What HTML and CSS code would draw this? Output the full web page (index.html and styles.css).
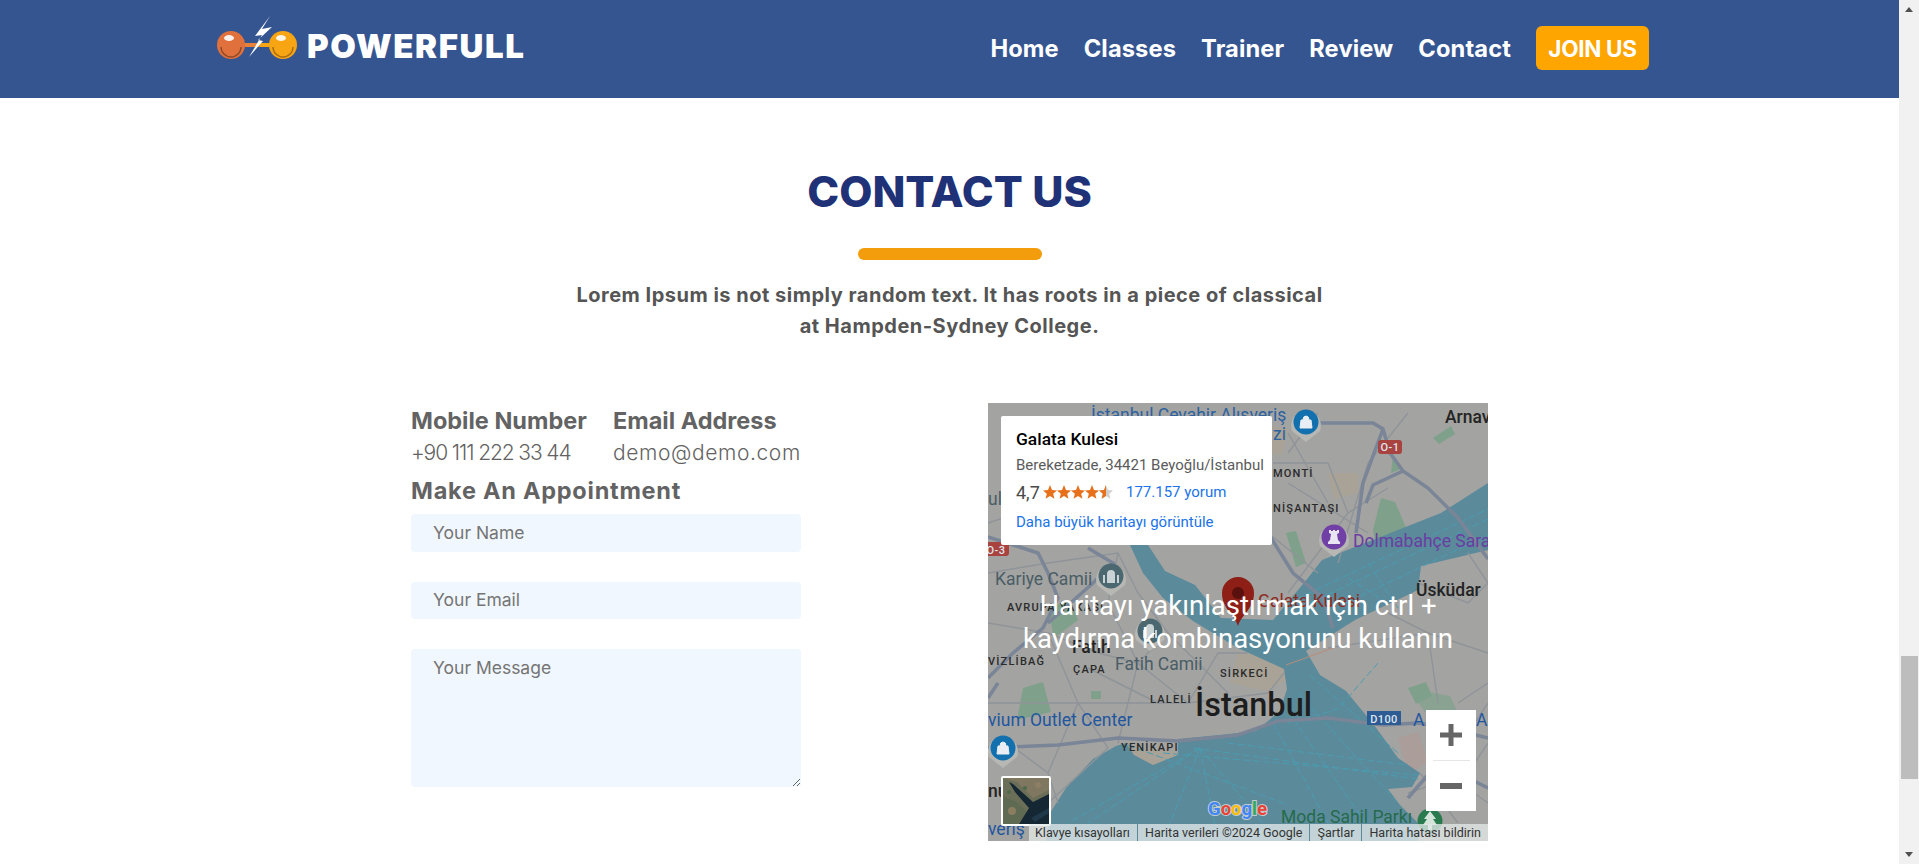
FILE: index.html
```html
<!DOCTYPE html>
<html lang="tr">
<head>
<meta charset="utf-8">
<title>Powerfull - Contact</title>
<link rel="stylesheet" href="styles.css">
</head>
<body>
<div class="page">
  <header class="topbar">
    <a class="logo" href="#">
      <svg class="logo-mark" width="92" height="50" viewBox="0 0 92 50" aria-hidden="true">
        <rect x="14" y="27" width="30" height="4" fill="#e8813a"/>
        <rect x="44" y="27" width="26" height="4" fill="#f8a513"/>
        <circle cx="15" cy="29" r="14" fill="#e0703c"/>
        <circle cx="67" cy="29" r="14" fill="#f8a513"/>
        <path d="M5 31a10 10 0 0 0 20 0" fill="none" stroke="#8d4a2a" stroke-width="1.4"/>
        <path d="M57 31a10 10 0 0 0 20 0" fill="none" stroke="#a86c10" stroke-width="1.4"/>
        <ellipse cx="13" cy="22" rx="5" ry="3" fill="#fff" opacity=".9"/>
        <ellipse cx="65" cy="22" rx="5" ry="3" fill="#fff" opacity=".9"/>
        <path d="M54 0 39 20 46 19 33 41 47 25 42 24 56 11 46 13Z" fill="#fff"/>
      </svg>
      <span class="logo-text">POWERFULL</span>
    </a>
    <nav class="nav">
      <a href="#">Home</a>
      <a href="#">Classes</a>
      <a href="#">Trainer</a>
      <a href="#">Review</a>
      <a href="#">Contact</a>
      <a class="join" href="#">JOIN US</a>
    </nav>
  </header>

  <main class="contact">
    <h1 class="title">CONTACT US</h1>
    <div class="title-bar"></div>
    <p class="lead">Lorem Ipsum is not simply random text. It has roots in a piece of classical<br>at Hampden-Sydney College.</p>

    <div class="columns">
      <section class="info">
        <div class="info-row">
          <div>
            <h3 class="label">Mobile Number</h3>
            <p class="value value-phone">+90 111 222 33 44</p>
          </div>
          <div>
            <h3 class="label">Email Address</h3>
            <p class="value value-mail">demo@demo.com</p>
          </div>
        </div>
        <h3 class="label label-make">Make An Appointment</h3>
        <form class="form">
          <input class="field" type="text" placeholder="Your Name">
          <input class="field field-email" type="email" placeholder="Your Email">
          <textarea class="field field-message" placeholder="Your Message"></textarea>
        </form>
      </section>

      <section class="map">
        <svg class="map-art" width="500" height="438" viewBox="0 0 500 438" aria-hidden="true">
          <rect width="500" height="438" fill="#a3a3a1"/>
          <!-- parks and districts -->
          <g fill="#7fa18b">
            <path d="M393 95l14 4 12 28-6 30-22 4-6-34z"/>
            <path d="M60 205l22-8 8 20-24 18z"/>
            <path d="M35 285l20-6 8 30-34 8z"/>
            <rect x="103" y="288" width="10" height="8"/>
            <path d="M420 285l18-6 6 14-16 8z"/>
            <path d="M420 285l42 8 12 26-34-6z" opacity=".7"/>
            <path d="M342 168l14 10-6 12-12-8z"/>
            <path d="M298 130l10-2 10 32-10 4z"/>
            <path d="M405 52l8 14-10 4z"/>
            <path d="M445 35l18-12 4 8-16 10z"/>
            <path d="M430 130l12 4-4 14-10-6z"/>
          </g>
          <g fill="#aea391" opacity=".6">
            <path d="M250 250l50 2 8 20-30 16-36-8z"/>
            <path d="M140 345l50 4-8 16-26 4z"/>
            <path d="M270 20l30 6-6 26-24-2z"/>
            <path d="M340 70l30 0 0 20-24 6z"/>
          </g>
          <path d="M410 335l20-6 10 30-20 12z" fill="#b09a94" opacity=".6"/>

          <!-- water -->
          <path class="water" d="M58 438 62 410 78 385 105 356 128 343 138 340 146 352 165 362 190 352 190 336 232 332 268 328 292 308 299 286 296 266 250 245 205 218 175 195 155 170 142 142 160 142 177 168 207 182 233 215 285 217 320 175 334 157 372 142 453 110 500 80 500 147 433 163 430 187 367 217 318 248 332 272 358 288 386 322 410 355 432 370 424 384 400 386 412 402 430 420 430 438Z"/>

          <!-- ferry lanes -->
          <g class="ferry">
            <path d="M140 342 300 402M175 350 430 372M205 345 430 376M240 340 420 362M285 320 350 438M300 308 390 438M310 290 410 400M322 272 410 350M300 200 500 106M322 200 500 116M345 206 500 132M360 175 400 200M380 160 410 205"/>
            <path d="M212 345 175 438M212 345 230 438M212 345 100 420M212 345 80 420M212 345 290 438"/>
            <path d="M390 260 350 306 300 320"/>
          </g>

          <!-- roads -->
          <g class="road-minor">
            <path d="M0 120 60 100 110 80 180 60 280 50M285 60 340 60 360 110 330 150 300 190M360 110 400 85M300 80 380 130M280 130 330 170M300 30 340 100M420 10 380 60 350 160M330 10 300 50"/>
            <path d="M0 170 60 160 130 150 150 190 180 230 150 260 110 250 60 230 0 220M130 150 120 200 150 260 200 300 280 290 296 270M60 230 90 300 60 370M0 300 90 300 200 300M150 260 130 340M90 300 120 345 60 400M20 340 60 370 70 400"/>
            <path d="M180 230 240 290M200 300 230 250 260 250M100 265 170 300"/>
            <path d="M340 245 440 230 500 250M430 180 480 200 500 180M440 230 450 300M400 210 440 230M440 310 480 330 500 300M445 360 500 400M420 390 480 370 500 340M470 300 500 280M432 370 470 420M480 150 500 180"/>
          </g>
          <g class="road-major">
            <path d="M330 20 385 20 395 26 402 50 415 68 440 85 470 115 500 156"/>
            <path d="M415 68 385 82 378 100"/>
            <path d="M395 26 375 80 368 130"/>
            <path d="M0 134 50 150 60 170 70 195 55 225 25 250 0 275"/>
            <path d="M100 145 125 160 105 180 60 220"/>
            <path d="M0 295 10 280"/>
            <path d="M0 345 70 342 130 335 190 338 250 332 290 318 340 315 395 322 430 320 460 325 500 335"/>
            <path d="M420 395 450 360 500 385"/>
            <path d="M280 130 305 170 335 195 345 225"/>
          </g>
          <path d="M298 262 345 245" fill="none" stroke="#b78d7a" stroke-width="1"/>

          <!-- labels -->
          <text class="t-poi t-blue" x="103" y="18">İstanbul Cevahir Alışveriş</text>
          <text class="t-poi t-blue" x="285" y="37">zi</text>
          <text class="t-city" x="457" y="20">Arnav</text>
          <text class="t-dist" x="285" y="74">MONTİ</text>
          <text class="t-dist" x="285" y="109">NİŞANTAŞI</text>
          <text class="t-poi t-purple" x="365" y="144">Dolmabahçe Sara</text>
          <text class="t-poi t-slate" x="0" y="102">ult</text>
          <text class="t-poi t-slate" x="7" y="182">Kariye Camii</text>
          <text class="t-dist" x="19" y="208">AVRUPA YAKASI</text>
          <text class="t-poi t-red" x="270" y="204">Galata Kulesi</text>
          <text class="t-city" x="428" y="193">Üsküdar</text>
          <text class="t-city" x="84" y="250">Fatih</text>
          <text class="t-dist" x="85" y="270">ÇAPA</text>
          <text class="t-poi t-slate" x="127" y="267">Fatih Camii</text>
          <text class="t-dist" x="0" y="262">VİZLİBAĞ</text>
          <text class="t-dist" x="232" y="274">SİRKECİ</text>
          <text class="t-dist" x="162" y="300">LALELİ</text>
          <text class="t-big" x="207" y="313">İstanbul</text>
          <text class="t-poi t-navy" x="0" y="323">vium Outlet Center</text>
          <text class="t-dist" x="133" y="348">YENİKAPI</text>
          <text class="t-poi t-green" x="293" y="420">Moda Sahil Parkı</text>
          <text class="t-poi t-navy" x="425" y="323">A</text>
          <text class="t-poi t-navy" x="488" y="323">A</text>
          <text class="t-city" x="0" y="394">nu</text>
          <text class="t-poi t-navy" x="0" y="432">veriş</text>

          <!-- road shields -->
          <g class="shield">
            <rect x="390" y="37" width="24" height="14" rx="3" fill="#a8433f"/>
            <text x="402" y="48">O-1</text>
            <rect x="-6" y="139" width="27" height="14" rx="3" fill="#a8433f"/>
            <text x="8" y="151">O-3</text>
            <rect x="379" y="308" width="34" height="14" fill="#2d5b94"/>
            <text x="396" y="320">D100</text>
          </g>

          <!-- pins -->
          <g>
            <path d="M304 28a15 15 0 1 1 28 0l-14 11z" fill="#b7b7b4"/>
            <circle cx="318" cy="19" r="12.5" fill="#1170ad"/>
            <path d="M313 17h10l1 8h-12z M315 17a3 4 0 0 1 6 0" fill="#e8eef3" stroke="#e8eef3" stroke-width="1"/>
            <path d="M1 354a15 15 0 1 1 28 0l-14 11z" fill="#b7b7b4"/>
            <circle cx="15" cy="345" r="12.5" fill="#1170ad"/>
            <path d="M10 343h10l1 8h-12z M12 343a3 4 0 0 1 6 0" fill="#e8eef3" stroke="#e8eef3" stroke-width="1"/>
            <path d="M332 143a15 15 0 1 1 28 0l-14 11z" fill="#b7b7b4"/>
            <circle cx="346" cy="134" r="12.5" fill="#7140a6"/>
            <path d="M340 141h12v-2l-2-2-1-6 2-1v-3h-2v1h-2v-1h-2v1h-2v-1h-2v3l2 1-1 6-2 2z" fill="#e9e4f1"/>
            <path d="M109 182a15 15 0 1 1 28 0l-14 11z" fill="#b7b7b4"/>
            <circle cx="123" cy="173" r="12.5" fill="#4b6770"/>
            <path d="M115 180v-8h2v8zM119 180v-9a4 4 0 0 1 8 0v9zM129 180v-8h2v8z" fill="#c9d2d5"/>
            <path d="M148 237a15 15 0 1 1 28 0l-14 11z" fill="#b7b7b4"/>
            <circle cx="162" cy="228" r="12.5" fill="#4b6770"/>
            <path d="M155 235v-8h2v8zM158 235v-10a4 4 0 0 1 8 0v10zM167 235v-8h2v8z" fill="#c9d2d5"/>
            <circle cx="442" cy="418" r="12.5" fill="#2a7a50"/>
            <path d="M442 408l6 8h-3l4 6h-5v5h-4v-5h-5l4-6h-3z" fill="#d4e4da"/>
          </g>
          <!-- place marker -->
          <path d="M250 223c-3-11-16-17-16-33a16 16 0 0 1 32 0c0 16-13 22-16 33z" fill="#8e1f17"/>
          <circle cx="250" cy="190" r="6" fill="#5a100c"/>

          <!-- Google wordmark -->
          <text class="t-google" x="220" y="412"><tspan fill="#4285f4">G</tspan><tspan fill="#ea4335">o</tspan><tspan fill="#fbbc05">o</tspan><tspan fill="#4285f4">g</tspan><tspan fill="#34a853">l</tspan><tspan fill="#ea4335">e</tspan></text>
        </svg>

        <div class="map-message">Haritayı yakınlaştırmak için ctrl + kaydırma kombinasyonunu kullanın</div>

        <div class="place-card">
          <div class="place-name">Galata Kulesi</div>
          <div class="place-address">Bereketzade, 34421 Beyoğlu/İstanbul</div>
          <div class="place-rating">
            <span class="rating-num">4,7</span>
            <svg class="stars" width="70" height="14" viewBox="0 0 70 14" aria-hidden="true">
              <defs><path id="star" d="M7 0l2 5 5 .4-3.800 3.300 1.200 5.100L7 11.100l-4.400 2.700 1.200-5.100L0 5.400 5 5z"/></defs>
              <use href="#star" fill="#e7711b"/>
              <use href="#star" x="14" fill="#e7711b"/>
              <use href="#star" x="28" fill="#e7711b"/>
              <use href="#star" x="42" fill="#e7711b"/>
              <use href="#star" x="56" fill="#cfcfcf"/>
              <path d="M63 0v11.100l-4.400 2.700 1.200-5.100L56 5.400 61 5z" fill="#e7711b"/>
            </svg>
            <a class="place-link rating-link" href="#">177.157 yorum</a>
          </div>
          <a class="place-link place-more" href="#">Daha büyük haritayı görüntüle</a>
        </div>

        <div class="sat-thumb">
          <svg width="46" height="46" viewBox="0 0 46 46" aria-hidden="true">
            <rect width="46" height="46" fill="#6b6f58"/>
            <path d="M0 0h46v12L30 20 14 4z" fill="#7f7760"/>
            <path d="M0 18l14 6 10 10-10 12H0z" fill="#5f6a52"/>
            <path d="M46 16 30 24 10 6 6 4 12 14 26 30 16 46h30z" fill="#152733"/>
            <path d="M28 40l18-10v5L32 44z" fill="#20394a"/>
            <circle cx="9" cy="33" r="4" fill="#8a7d60"/>
            <circle cx="35" cy="7" r="3" fill="#8d7f64"/>
            <circle cx="22" cy="10" r="2" fill="#4f6a4a"/>
            <circle cx="6" cy="14" r="2" fill="#4f6a4a"/>
          </svg>
        </div>

        <div class="zoom-ctl">
          <button class="zoom-btn" type="button" aria-label="Yakınlaştır"><svg width="22" height="22" viewBox="0 0 22 22"><path d="M0 8.500h8.500V0h5v8.500H22v5h-8.500V22h-5v-8.500H0z" fill="#666"/></svg></button>
          <div class="zoom-sep"></div>
          <button class="zoom-btn" type="button" aria-label="Uzaklaştır"><svg width="22" height="6" viewBox="0 0 22 6"><rect width="22" height="6" fill="#666"/></svg></button>
        </div>

        <div class="attrib">
          <span>Klavye kısayolları</span>
          <span>Harita verileri ©2024 Google</span>
          <span>Şartlar</span>
          <span>Harita hatası bildirin</span>
        </div>
      </section>
    </div>
  </main>
</div>

<aside class="scrollbar" aria-hidden="true">
  <div class="arrow-up"></div>
  <div class="thumb"></div>
  <div class="arrow-down"></div>
</aside>
</body>
</html>
```

FILE: styles.css
```css
* { box-sizing: border-box; }
html, body { margin: 0; height: 100%; }
body {
  display: flex;
  height: 864px;
  overflow: hidden;
  background: #fff;
  font-family: Inter, "Liberation Sans", sans-serif;
  color: #555;
}
a { text-decoration: none; color: inherit; }
h1, h3, p { margin: 0; }

.page { flex: 1; min-width: 0; }

.topbar {
  height: 98px;
  display: flex;
  align-items: center;
  justify-content: space-between;
  padding: 0 250px 0 216px;
  background: #355591;
}
.logo { display: flex; align-items: center; margin-top: -8px; }
.logo-mark { flex: none; margin-top: -8px; }
.logo-text {
  margin-top: 2px;
  margin-left: -1px;
  font-size: 33px;
  font-weight: 900;
  letter-spacing: 1.600px;
  color: #fff;
}
.nav {
  display: flex;
  align-items: center;
  gap: 25px;
  margin-top: -2px;
  font-size: 23.700px;
  font-weight: 700;
  letter-spacing: .1px;
  color: #fff;
}
.join {
  height: 44px;
  width: 113px;
  display: flex;
  align-items: center;
  justify-content: center;
  border-radius: 6px;
  background: #ffa500;
  font-size: 22.500px;
  letter-spacing: -.3px;
}

.title {
  margin-top: 63px;
  height: 60px;
  font-size: 43px;
  line-height: 60px;
  font-weight: 800;
  text-align: center;
  color: #1f3278;
}
.title-bar {
  width: 184px;
  height: 12px;
  margin: 27px auto 0;
  border-radius: 6px;
  background: #f39c0c;
}
.lead {
  margin-top: 20px;
  font-size: 20px;
  line-height: 31px;
  font-weight: 700;
  letter-spacing: .5px;
  text-align: center;
  color: #555;
}

.columns {
  display: flex;
  gap: 187px;
  margin-top: 61px;
  padding-left: 411px;
}
.info { width: 390px; flex: none; padding-top: 1px; }
.info-row {
  display: grid;
  grid-template-columns: 202px 1fr;
}
.label {
  font-size: 23.500px;
  line-height: 33px;
  font-weight: 700;
  color: #636363;
}
.value {
  font-size: 21px;
  line-height: 32px;
  font-weight: 300;
  color: #636363;
}
.value-phone { letter-spacing: -1.100px; }
.value-mail { letter-spacing: .6px; }
.label-make { margin-top: 5px; letter-spacing: .75px; }
.form { display: flex; flex-direction: column; margin-top: 7px; }
.field {
  display: block;
  width: 100%;
  height: 38px;
  border: 0;
  outline: 0;
  border-radius: 4px;
  padding: 0 22px 2px;
  background: #f1f7fe;
  font: 400 17.500px Inter, "Liberation Sans", sans-serif;
  color: #555;
}
.field::placeholder { color: #757575; opacity: 1; }
.field-email { margin-top: 30px; height: 37px; }
.field-message {
  margin-top: 30px;
  height: 138px;
  padding-top: 8px;
  resize: vertical;
}

.map {
  position: relative;
  width: 500px;
  height: 438px;
  flex: none;
  overflow: hidden;
  font-family: Roboto, "Liberation Sans", sans-serif;
}
.map-art { display: block; }
.water { fill: #5b8a9b; }
.ferry { fill: none; stroke: #4a9db0; stroke-width: 1; stroke-dasharray: 7 3; }
.road-minor { fill: none; stroke: #8f9499; stroke-width: 1.4; }
.road-major { fill: none; stroke: #7a8597; stroke-width: 3.5; }
.map-art text { font-family: Roboto, "Liberation Sans", sans-serif; }
.t-poi { font-size: 17.500px; }
.t-blue { fill: #2c62a0; }
.t-purple { fill: #6a3da2; }
.t-slate { fill: #4a5d66; }
.t-red { fill: #8e2a20; }
.t-navy { fill: #1f56a0; }
.t-green { fill: #256a4a; }
.t-city { font-size: 17.500px; font-weight: 500; fill: #242424; }
.t-dist { font-size: 11px; font-weight: 500; letter-spacing: 1.200px; fill: #2a2a2a; }
.t-big { font-size: 32.500px; font-weight: 500; fill: #1d1d1d; }
.shield text { font-size: 11px; font-weight: 500; fill: #dfe6ee; text-anchor: middle; letter-spacing: .4px; }
.t-google {
  font-size: 18.500px;
  font-weight: 700;
  stroke: #e4e4e4;
  stroke-width: 2;
  paint-order: stroke;
  stroke-opacity: .75;
}

.map-message {
  position: absolute;
  inset: 0;
  display: flex;
  align-items: center;
  justify-content: center;
  padding: 0 25px;
  font-size: 27.500px;
  line-height: 33px;
  text-align: center;
  color: #fff;
}

.place-card {
  position: absolute;
  left: 13px;
  top: 13px;
  width: 271px;
  height: 129px;
  padding: 11px 7px 0 15px;
  border-radius: 2px;
  background: #fff;
  font-size: 15px;
  color: #5b5b5b;
}
.place-name { font-size: 17.400px; line-height: 24px; font-weight: 500; color: #000; }
.place-address { margin-top: 4px; line-height: 20px; white-space: nowrap; }
.place-rating { display: flex; align-items: center; height: 24px; margin-top: 5px; }
.rating-num { font-size: 18px; width: 27px; color: #4a4a4a; }
.stars { flex: none; }
.rating-link { margin-left: 13px; }
.place-link { color: #1a73e8; }
.place-more { display: block; margin-top: 8px; line-height: 20px; }

.sat-thumb {
  position: absolute;
  left: 13px;
  top: 373px;
  width: 50px;
  height: 50px;
  border: 2px solid #fff;
  border-radius: 2px;
  overflow: hidden;
}
.sat-thumb svg { display: block; }

.zoom-ctl {
  position: absolute;
  left: 438px;
  top: 307px;
  width: 50px;
  height: 101px;
  display: flex;
  flex-direction: column;
  align-items: center;
  background: #fff;
}
.zoom-btn {
  display: flex;
  align-items: center;
  justify-content: center;
  width: 50px;
  height: 50px;
  padding: 0;
  border: 0;
  background: none;
}
.zoom-sep { width: 37px; height: 1px; flex: none; background: #e6e6e6; }

.attrib {
  position: absolute;
  left: 41px;
  right: 0;
  bottom: 0;
  height: 17px;
  display: flex;
  justify-content: flex-end;
  gap: 1px;
  font-size: 12.500px;
  line-height: 17px;
  color: #333;
  white-space: nowrap;
}
.attrib span { padding: 0 7px; background: rgba(226, 232, 232, .78); }
.attrib span:first-child { flex: 1; text-align: left; padding-left: 6px; }

.scrollbar {
  width: 20px;
  height: 864px;
  flex: none;
  display: flex;
  flex-direction: column;
  align-items: center;
  background: #f1f1f1;
}
.arrow-up {
  width: 0;
  height: 0;
  margin-top: 7px;
  border: 4.500px solid transparent;
  border-top: 0;
  border-bottom: 5px solid #505050;
}
.thumb {
  width: 17px;
  height: 123px;
  margin-top: 644px;
  margin-left: 1px;
  background: #bdbdbd;
}
.arrow-down {
  width: 0;
  height: 0;
  margin-top: 73px;
  border: 4.500px solid transparent;
  border-bottom: 0;
  border-top: 5px solid #505050;
}
```
